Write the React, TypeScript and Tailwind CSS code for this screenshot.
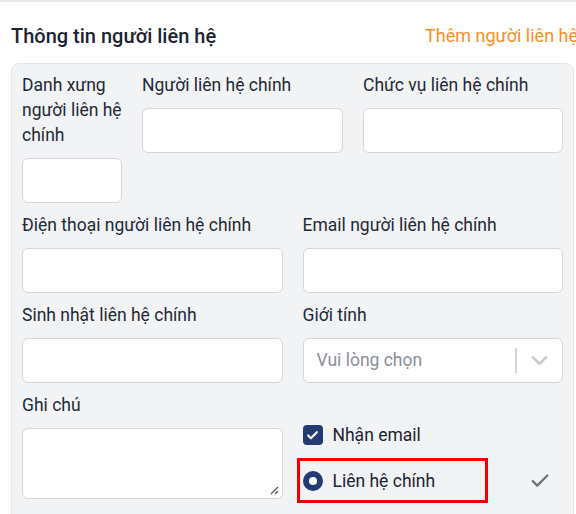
import { Check, ChevronDown } from "lucide-react";

function Label({ children, wide = true }: { children: string; wide?: boolean }) {
  return (
    <span className={`text-[17.5px] leading-[25px] text-[#1f2937] ${wide ? "" : "w-[104px]"}`}>{children}</span>
  );
}

function Box({ label, className = "", narrow = false }: { label: string; className?: string; narrow?: boolean }) {
  return (
    <div className={`flex flex-col ${className}`}>
      <Label wide={!narrow}>{label}</Label>
      <div className="mt-[10px] h-[45px] rounded-[6px] border border-[#d4d6da] bg-white" />
    </div>
  );
}

export default function App() {
  return (
    <div className="h-[514px] w-[576px] overflow-hidden bg-white font-['Roboto',sans-serif]">
      <div className="h-[2px] bg-[#e6e8ec]" />
      <div className="flex items-center justify-between pl-[11px] pt-[22px] pb-[15px]">
        <span className="text-[20px] leading-[24px] font-medium text-[#1b2430]">Thông tin người liên hệ</span>
        <span className="-mr-[2px] whitespace-nowrap text-[18px] leading-[24px] text-[#f7901e]">Thêm người liên hệ</span>
      </div>
      <div className="ml-[11px] mr-[2px] h-[460px] rounded-t-[8px] border border-[#e3e5e9] bg-[#f2f3f5] px-[10px] pt-[9px]">
        <div className="flex gap-[20px]">
          <Box label="Danh xưng người liên hệ chính" className="w-[100px]" narrow />
          <Box label="Người liên hệ chính" className="w-[201px]" />
          <Box label="Chức vụ liên hệ chính" className="flex-1" />
        </div>
        <div className="mt-[10px] grid grid-cols-2 gap-x-[20px] gap-y-[10px]">
          <Box label="Điện thoại người liên hệ chính" />
          <Box label="Email người liên hệ chính" />
          <Box label="Sinh nhật liên hệ chính" />
          <div className="flex flex-col">
            <Label>Giới tính</Label>
            <div className="mt-[10px] flex h-[45px] items-center rounded-[6px] border border-[#d4d6da] bg-white pl-[13px]">
              <span className="flex-1 text-[17.5px] text-[#8a9099]">Vui lòng chọn</span>
              <span className="h-[25px] w-[2px] bg-[#d3d5d9]" />
              <ChevronDown className="mx-[9px] h-[27px] w-[27px] text-[#c5c8cc]" strokeWidth={2} />
            </div>
          </div>
          <div className="flex flex-col">
            <Label>Ghi chú</Label>
            <div className="relative mt-[10px] h-[71px] rounded-[6px] border border-[#d4d6da] bg-white">
              <svg className="absolute bottom-[3px] right-[3px]" width="9" height="9" viewBox="0 0 9 9">
                <path d="M8 1L1 8M8 5L5 8" stroke="#555" strokeWidth="1.2" />
              </svg>
            </div>
          </div>
          <div className="flex flex-col pt-[32px]">
            <div className="flex items-center gap-[10px]">
              <span className="flex h-[20px] w-[20px] items-center justify-center rounded-[4px] bg-[#233a73]">
                <Check className="h-[13px] w-[13px] text-white" strokeWidth={4} />
              </span>
              <span className="text-[17.5px] leading-[20px] text-[#1b2430]">Nhận email</span>
            </div>
            <div className="mt-[13px] flex items-center">
              <div className="-ml-[6px] flex h-[45px] w-[191px] items-center gap-[10px] border-[3px] border-[#f00000] pl-[3px]">
                <span className="flex h-[20px] w-[20px] items-center justify-center rounded-full bg-[#233a73]">
                  <span className="h-[8px] w-[8px] rounded-full bg-white" />
                </span>
                <span className="text-[17.5px] leading-[20px] text-[#1b2430]">Liên hệ chính</span>
              </div>
              <Check className="ml-[41px] h-[22px] w-[22px] text-[#6b7079]" strokeWidth={2.5} />
            </div>
          </div>
        </div>
      </div>
    </div>
  );
}
